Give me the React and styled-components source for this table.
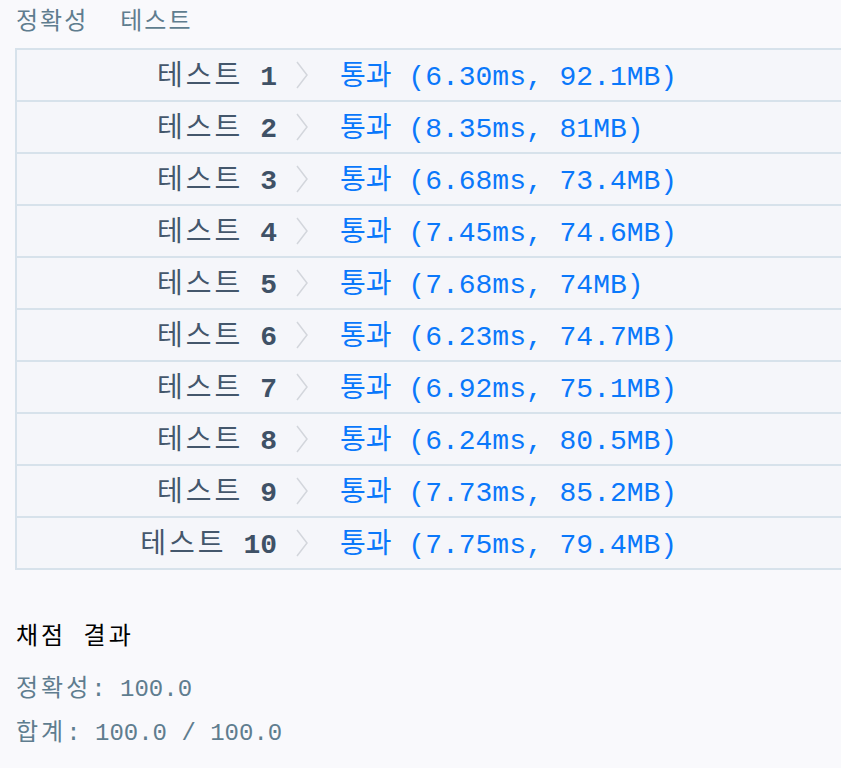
import styled, { createGlobalStyle } from 'styled-components';

const GlobalStyle = createGlobalStyle`
  html, body {
    margin: 0;
    padding: 0;
    background: #f9f9fc;
    overflow: hidden;
  }
  body {
    font-family: "Liberation Mono", "Noto Sans CJK KR", monospace;
  }
`;

const StyledPage = styled.div`
  padding-left: 15px;
  width: 1000px;
`;

const StyledKo = styled.span`
  letter-spacing: ${({ $spacing }) => $spacing || '3px'};
`;

const StyledHeader = styled.div`
  display: flex;
  gap: 32px;
  padding: 6px 0 0 1px;
  height: 34px;
  line-height: 34px;
  font-size: 24px;
  color: #5f7d8f;
`;

const StyledTable = styled.div`
  margin-top: 8px;
  border: 2px solid #d7e2eb;
  border-right: none;
  background: #f5f6fa;
`;

const StyledRow = styled.div`
  display: grid;
  grid-template-columns: 260px 63px 1fr;
  align-items: center;
  height: 46px;
  padding-bottom: 4px;
  font-size: 28px;
  border-top: ${({ $first }) => ($first ? 'none' : '2px solid #d7e2eb')};
`;

const StyledLabel = styled.span`
  text-align: right;
  color: #44576c;
  white-space: pre;
`;

const StyledNumber = styled.span`
  font-weight: bold;
  color: #3f5166;
`;

const StyledChevron = styled.svg`
  width: 14px;
  height: 28px;
  margin: 4px 0 0 18px;
  stroke: #d3d6dc;
  fill: none;
  stroke-width: 1.5;
`;

const StyledResult = styled.span`
  color: #0a78fa;
  white-space: pre;
`;

const StyledSummaryTitle = styled.div`
  margin-top: 48px;
  padding-left: 1px;
  height: 40px;
  line-height: 40px;
  font-size: 24px;
  color: #000;
`;

const StyledSummaryLine = styled.div`
  padding-left: 1px;
  height: 44px;
  line-height: 44px;
  font-size: 24px;
  color: #5f7d8f;
  white-space: pre;
`;

const StyledSummary = styled.div`
  margin-top: 10px;
`;

const tests = [
  ['6.30ms', '92.1MB'],
  ['8.35ms', '81MB'],
  ['6.68ms', '73.4MB'],
  ['7.45ms', '74.6MB'],
  ['7.68ms', '74MB'],
  ['6.23ms', '74.7MB'],
  ['6.92ms', '75.1MB'],
  ['6.24ms', '80.5MB'],
  ['7.73ms', '85.2MB'],
  ['7.75ms', '79.4MB'],
];

const App = () => (
  <>
    <GlobalStyle />
    <StyledPage>
      <StyledHeader>
        <StyledKo $spacing="2px">정확성</StyledKo>
        <StyledKo $spacing="2px">테스트</StyledKo>
      </StyledHeader>
      <StyledTable>
        {tests.map(([time, mem], i) => (
          <StyledRow key={i} $first={i === 0}>
            <StyledLabel>
              <StyledKo>테스트</StyledKo> <StyledNumber>{i + 1}</StyledNumber>
            </StyledLabel>
            <StyledChevron viewBox="0 0 14 28">
              <path d="M2 1 L12 14 L2 27" />
            </StyledChevron>
            <StyledResult>{`통과 (${time}, ${mem})`}</StyledResult>
          </StyledRow>
        ))}
      </StyledTable>
      <StyledSummaryTitle>
        <StyledKo>채점 결과</StyledKo>
      </StyledSummaryTitle>
      <StyledSummary>
        <StyledSummaryLine>
          <StyledKo>정확성</StyledKo>: 100.0
        </StyledSummaryLine>
        <StyledSummaryLine>
          <StyledKo>합계</StyledKo>: 100.0 / 100.0
        </StyledSummaryLine>
      </StyledSummary>
    </StyledPage>
  </>
);

export default App;
